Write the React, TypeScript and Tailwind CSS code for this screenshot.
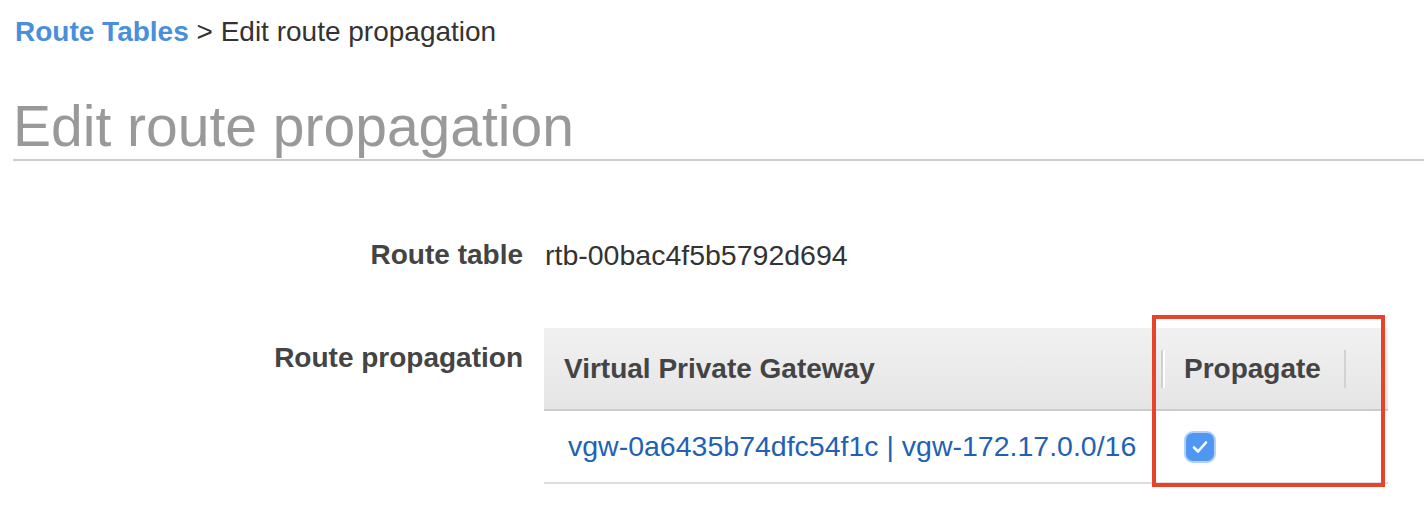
export default function App() {
  return (
    <div className="relative min-h-[510px] bg-white pl-[13px] font-['Liberation_Sans',Arial,sans-serif] text-[#333]">
      {/* Breadcrumb */}
      <div className="pt-[16px] pl-[2px] text-[28px] leading-[32px]">
        <a href="#" className="font-bold text-[#4a8fdc]">
          Route Tables
        </a>
        <span className="text-[#333]"> &gt; Edit route propagation</span>
      </div>

      {/* Title */}
      <h1 className="mt-[45px] border-b-2 border-[#cccccc] text-[57px] leading-[66px] font-normal text-[#999999]">
        Edit route propagation
      </h1>

      {/* Form */}
      <div className="mt-[78px] grid grid-cols-[510px_1fr] gap-x-[21px] gap-y-[57px]">
        <div className="text-right text-[28px] leading-[32px] font-bold text-[#444]">Route table</div>
        <div className="pl-[1px] text-[28.5px] leading-[32px] text-[#333]">rtb-00bac4f5b5792d694</div>

        <div className="pt-[14px] text-right text-[28px] leading-[32px] font-bold text-[#444]">
          Route propagation
        </div>
        <div className="relative w-[844px]">
          <div className="flex h-[83px] items-center border-b-2 border-[#cccccc] bg-gradient-to-b from-[#f1f1f1] to-[#e5e5e5]">
            <div className="flex h-[38px] w-[617px] items-center pl-[20px] text-[28px] font-bold text-[#444]">
              Virtual Private Gateway
            </div>
            <div className="h-[38px] w-[2px] bg-[#d0d0d0]" />
            <div className="h-[38px] w-[2px] bg-white" />
            <div className="flex h-[38px] w-[179px] items-center pl-[19px] text-[28px] font-bold text-[#444]">
              Propagate
            </div>
            <div className="h-[38px] w-[2px] bg-[#d2d2d2]" />
          </div>
          <div className="flex h-[73px] items-center border-b-2 border-[#dddddd]">
            <div className="w-[622px] pl-[24px] text-[28.5px] text-[#1f62b5]">
              vgw-0a6435b74dfc54f1c | vgw-172.17.0.0/16
            </div>
            <div className="ml-[20px] flex h-[28px] w-[28px] shrink-0 items-center justify-center rounded-[7px] bg-[#4f97f3] ring-2 ring-[#b2d3f9]">
              <svg width="22" height="22" viewBox="0 0 22 22" fill="none" className="shrink-0">
                <path
                  d="M5 11.5 L9 15.5 L17 6.5"
                  stroke="white"
                  strokeWidth="2.6"
                  strokeLinecap="round"
                  strokeLinejoin="round"
                />
              </svg>
            </div>
          </div>

          {/* Highlight box */}
          <div className="pointer-events-none absolute left-[608px] top-[-13px] h-[172px] w-[233px] border-4 border-[#e8432a]" />
        </div>
      </div>
    </div>
  );
}
